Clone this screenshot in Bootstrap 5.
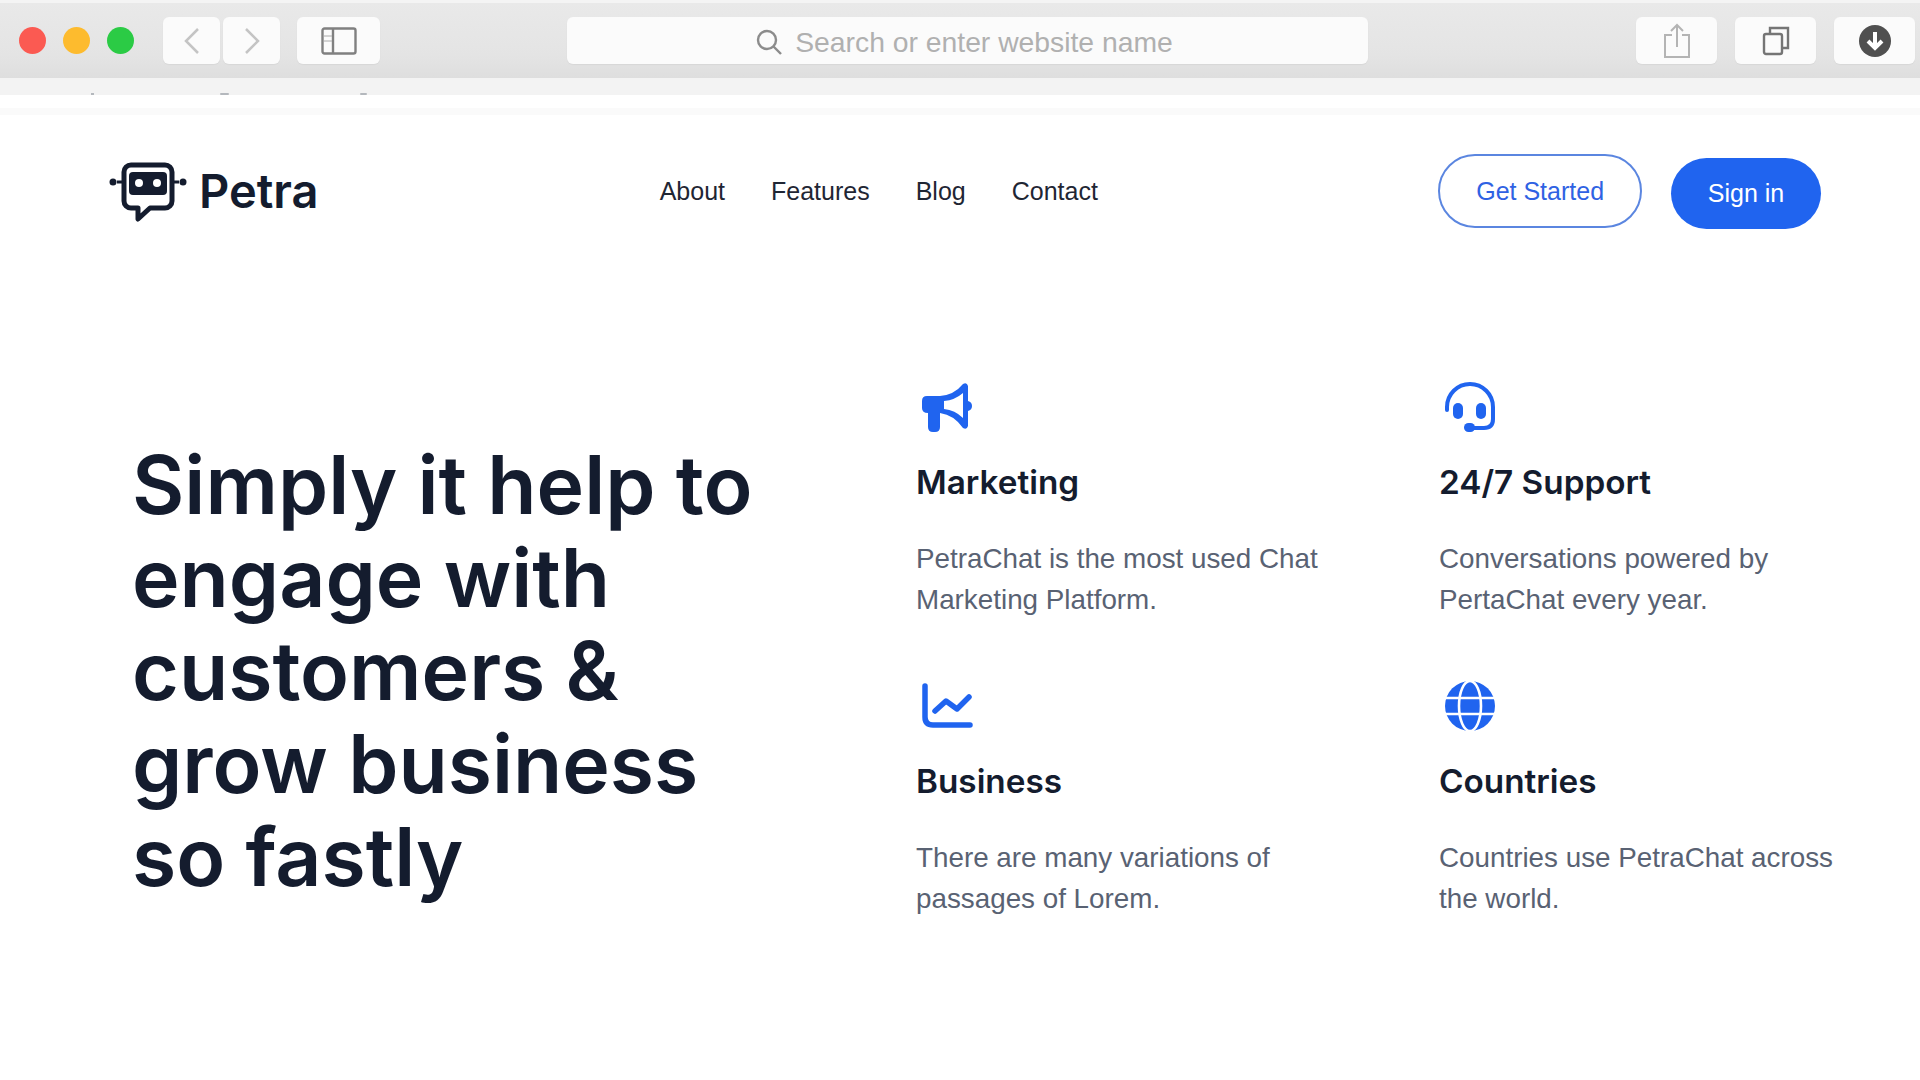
<!DOCTYPE html>
<html lang="en">
<head>
  <meta charset="UTF-8">
  <title>Petra</title>
  <link href="https://cdn.jsdelivr.net/npm/bootstrap@5.3.2/dist/css/bootstrap.min.css" rel="stylesheet">
  <style>
    html, body { height: 1080px; overflow: hidden; }
    body { background: #fff; font-family: "Liberation Sans", Arial, sans-serif; color: #141c2e; }
    .safari-bar { height: 78px; padding: 17px 3px 0 19px; background: linear-gradient(#e9e9e9, #e4e4e4 70%, #dedede); border-top: 3px solid #f4f4f4; }
    .safari-bar .lights { gap: 17px; margin-top: 7px; margin-right: 29px; }
    .light { width: 27px; height: 27px; border-radius: 50%; }
    .tool-btn { height: 47px; margin-top: -3px; background: #fbfbfb; border-radius: 6px; box-shadow: 0 1px 1px #d8d8d8; }
    .w-nav { width: 57px; margin-right: 3px; }
    .w-side { width: 83px; margin-left: 14px; margin-right: 187px; }
    .address { width: 801px; margin-right: 268px; color: #b0b0b0; font-size: 28.3px; gap: 12px; padding: 3px 7px 0 0; }
    .w-tool { width: 81px; margin-right: 18px; }
    .band { height: 17px; background: #f3f3f3; }
    .band svg { display: block; }
    .band-gap { height: 13px; }
    .band-low { height: 7px; background: #fafafa; }
    .top-nav { padding: 43px 99px 0 109px; height: 223px; }
    .brand { gap: 12px; width: 551px; margin-top: -1px; }
    .brand-name { font-family: Inter, sans-serif; font-weight: 600; font-size: 47px; line-height: 1; color: #141c2e; }
    .brand svg { margin-top: 5px; }
    .menu-link { font-size: 25px; color: #1f2634; padding: 0; margin-right: 46px; text-decoration: none; }
    .menu { width: 779px; margin-top: 15px; }
    .pill { border-radius: 40px; font-size: 25px; padding: 0; }
    .pill-outline { width: 204px; height: 74px; border: 2px solid #5b86e0; color: #2f62e3; background: #fff; margin-top: -4px; margin-right: 29px; padding-top: 2px; }
    .pill-solid { width: 150px; height: 71px; background: #2064ef; border: 0; color: #fff; }
    .hero-area { padding: 0 0 0 132px; }
    .hero-title { width: 784px; margin: 100px 0 0; font-family: Inter, sans-serif; font-weight: 600; font-size: 80.5px; line-height: 93px; color: #141c2e; }
    .feature-grid { display: grid; grid-template-columns: 523px 430px; padding-top: 43px; }
    .feature { height: 299px; }
    .feature svg { display: block; margin-left: 4px; }
    .feature h3 { font-family: Inter, sans-serif; font-weight: 600; font-size: 33.3px; line-height: 40px; margin: 29px 0 36px; color: #141c2e; }
    .feature p { font-size: 27.8px; line-height: 41px; color: #596273; margin: 0; max-width: 440px; }
  </style>
</head>
<body>

  <div class="safari-bar d-flex">
    <div class="lights d-flex">
      <div class="light" style="background:#fb5a52"></div>
      <div class="light" style="background:#fdbb2e"></div>
      <div class="light" style="background:#2bcb45"></div>
    </div>
    <div class="tool-btn w-nav d-flex align-items-center justify-content-center">
      <svg width="18" height="28" viewBox="0 0 18 28" fill="none" stroke="#c4c4c4" stroke-width="2.5"><path d="M15 2 3 14l12 12"/></svg>
    </div>
    <div class="tool-btn w-nav d-flex align-items-center justify-content-center">
      <svg width="18" height="28" viewBox="0 0 18 28" fill="none" stroke="#c4c4c4" stroke-width="2.5"><path d="M3 2l12 12L3 26"/></svg>
    </div>
    <div class="tool-btn w-side d-flex align-items-center justify-content-center">
      <svg width="36" height="28" viewBox="0 0 36 28" fill="none" stroke="#808080" stroke-width="2.4"><rect x="1.5" y="1.5" width="33" height="25" rx="2"/><path d="M12 1.5v25"/><path d="M3 9h8M3 14h8" stroke-width="1" stroke="#aaa"/></svg>
    </div>
    <div class="tool-btn address d-flex align-items-center justify-content-center">
      <svg width="28" height="28" viewBox="0 0 28 28" fill="none" stroke="#8c8c8c" stroke-width="2.4"><circle cx="12" cy="12" r="9"/><path d="M18.5 18.5 26 26"/></svg>
      <span>Search or enter website name</span>
    </div>
    <div class="tool-btn w-tool d-flex align-items-center justify-content-center">
      <svg width="28" height="36" viewBox="0 0 28 36" fill="none" stroke="#b4b4b4" stroke-width="2"><path d="M9 12H2v22h24V12h-7M14 24V2M8 8l6-6 6 6"/></svg>
    </div>
    <div class="tool-btn w-tool d-flex align-items-center justify-content-center">
      <svg width="28" height="30" viewBox="0 0 28 30" fill="none" stroke="#757575" stroke-width="2.4"><rect x="2" y="8" width="18" height="20" rx="2"/><path d="M8 8V2h18v20h-6"/></svg>
    </div>
    <div class="tool-btn w-tool d-flex align-items-center justify-content-center" style="margin-right:0">
      <svg width="32" height="32" viewBox="0 0 32 32"><circle cx="16" cy="16" r="16" fill="#505050"/><path d="M16 7v16M9 16l7 7 7-7" fill="none" stroke="#fff" stroke-width="4"/></svg>
    </div>
  </div>
  <div class="band">
    <svg width="400" height="17" viewBox="0 0 400 17" fill="#b4b8bd"><rect x="91" y="15" width="3" height="2"/><rect x="220" y="15" width="9" height="2" rx="1"/><rect x="360" y="15" width="7" height="2" rx="1"/></svg>
  </div>
  <div class="band-gap"></div>
  <div class="band-low"></div>

  <nav class="top-nav d-flex align-items-start">
    <a class="brand d-flex align-items-center text-decoration-none" href="#">
      <svg width="78" height="62" viewBox="0 0 78 62">
        <path d="M8 20h6M64 20h6" stroke="#141c2e" stroke-width="3"/>
        <circle cx="4" cy="20" r="3.5" fill="#141c2e"/><circle cx="74" cy="20" r="3.5" fill="#141c2e"/>
        <path d="M22 3h34a7 7 0 0 1 7 7v29a7 7 0 0 1-7 7H41L29 57V46h-7a7 7 0 0 1-7-7V10a7 7 0 0 1 7-7z" fill="none" stroke="#141c2e" stroke-width="5" stroke-linejoin="round"/>
        <rect x="20" y="10" width="38" height="23" rx="4" fill="#141c2e"/>
        <circle cx="30" cy="21" r="4" fill="#fff"/><circle cx="48" cy="21" r="4" fill="#fff"/>
      </svg>
      <span class="brand-name">Petra</span>
    </a>
    <div class="menu d-flex align-items-center">
      <a class="menu-link" href="#">About</a>
      <a class="menu-link" href="#">Features</a>
      <a class="menu-link" href="#">Blog</a>
      <a class="menu-link" href="#">Contact</a>
    </div>
    <button class="btn pill pill-outline" type="button">Get Started</button>
    <button class="btn pill pill-solid" type="button">Sign in</button>
  </nav>

  <main class="hero-area d-flex">
    <h1 class="hero-title">Simply it help to<br>engage with<br>customers &amp;<br>grow business<br>so fastly</h1>
    <div class="feature-grid">
      <div class="feature">
        <svg width="54" height="52" viewBox="0 0 54 52" fill="#2064ef"><path d="M2 20q0-5 5-5h15v17h-2v14q0 5-5 5h-2q-5 0-5-5V32q-6 0-6-5z"/><path fill-rule="evenodd" d="M20 15Q34 14 43 3q4-2 5 2v40q-1 4-5 2Q34 34 20 32zM24 20v8q11 1 19 9V12q-8 7-19 8z"/><path d="M48 20q4 1 4 5t-4 5z"/></svg>
        <h3>Marketing</h3>
        <p>PetraChat is the most used Chat Marketing Platform.</p>
      </div>
      <div class="feature">
        <svg width="54" height="52" viewBox="0 0 54 52" fill="none"><path d="M4 29v-3a23 23 0 0 1 46 0v12q0 9-9 9H28" stroke="#2064ef" stroke-width="4" stroke-linecap="round"/><rect x="10" y="22" width="10" height="16" rx="5" fill="#2064ef"/><rect x="33" y="22" width="10" height="16" rx="5" fill="#2064ef"/><rect x="21" y="42" width="11" height="9" rx="4.5" fill="#2064ef"/></svg>
        <h3>24/7 Support</h3>
        <p>Conversations powered by PertaChat every year.</p>
      </div>
      <div class="feature">
        <svg width="54" height="52" viewBox="0 0 54 52" fill="none" stroke="#2064ef" stroke-width="5.5" stroke-linecap="round" stroke-linejoin="round"><path d="M5 6v31q0 8 8 8h37"/><path d="M15 31 26 21l11 8 12-12"/></svg>
        <h3>Business</h3>
        <p>There are many variations of passages of Lorem.</p>
      </div>
      <div class="feature">
        <svg width="54" height="52" viewBox="0 0 54 52"><circle cx="27" cy="26" r="25" fill="#2064ef"/><g fill="none" stroke="#fff" stroke-width="2.6"><ellipse cx="27" cy="26" rx="11" ry="25"/><path d="M1 18h52M1 34h52"/></g></svg>
        <h3>Countries</h3>
        <p>Countries use PetraChat across the world.</p>
      </div>
    </div>
  </main>

</body>
</html>
